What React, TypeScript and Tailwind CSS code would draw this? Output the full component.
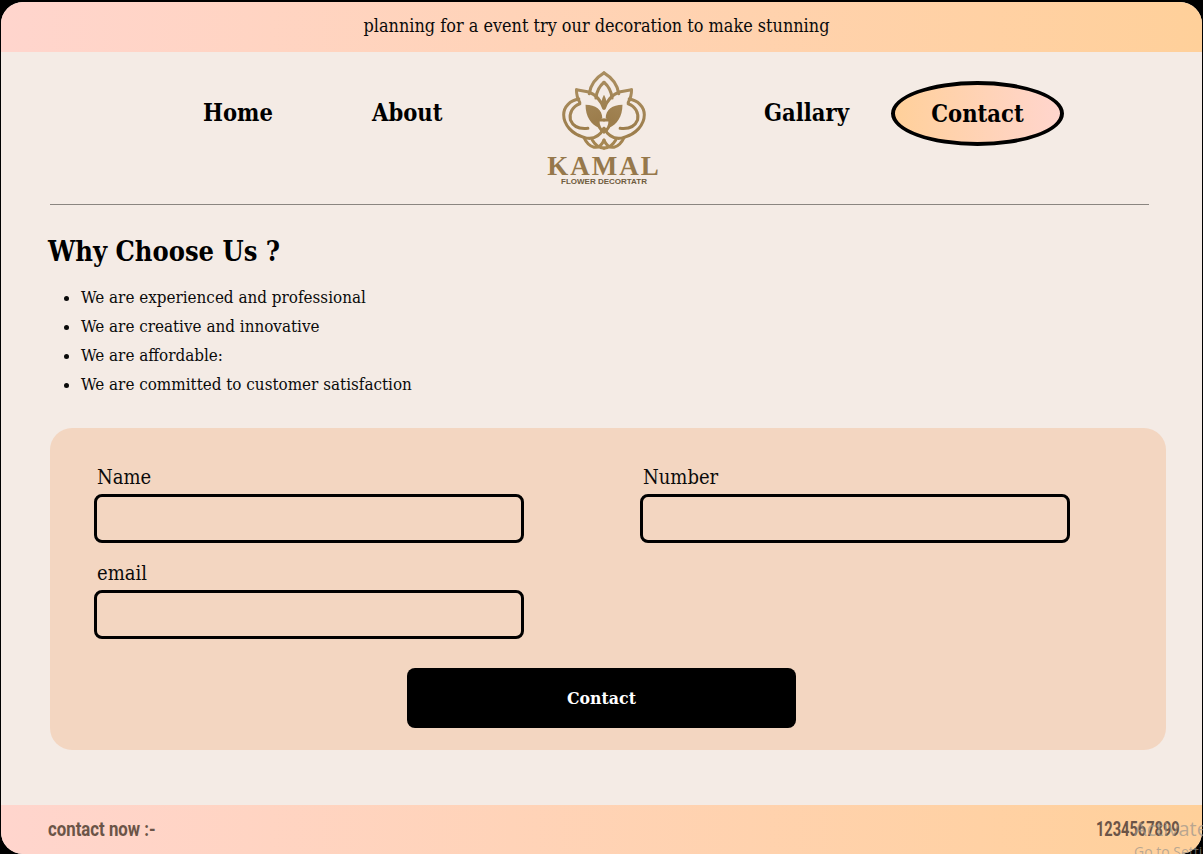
function Logo() {
  return (
    <div className="flex flex-col items-center w-[112px]">
      <svg width="84" height="81" viewBox="125 35 250 240" fill="none" strokeLinecap="round" strokeLinejoin="round">
        <defs>
          <linearGradient id="gold" gradientUnits="userSpaceOnUse" x1="200" y1="40" x2="300" y2="275">
            <stop offset="0" stopColor="#ac9062" />
            <stop offset="0.55" stopColor="#9c7d4c" />
            <stop offset="1" stopColor="#ad8e58" />
          </linearGradient>
          <g id="half">
            <g stroke="url(#gold)" strokeWidth="9">
              <path d="M250 40C225 55 210 75 206 102" />
              <path d="M250 68C236 80 228 95 226 115" />
              <path d="M168 90L205 97C225 105 240 120 249 145" />
              <path d="M168 90C168 105 172 118 178 128" />
              <path d="M175 118C150 122 130 140 130 165C130 195 155 222 190 232C215 240 235 232 250 205" />
              <path d="M178 132C156 140 146 160 150 180C158 200 175 208 202 205" />
              <path d="M190 232C205 264 235 275 250 240" />
              <path d="M215 240C228 262 240 264 250 264" />
              <path d="M232 180L250 180M232 180C232 200 240 210 250 216" />
            </g>
            <path fill="url(#gold)" d="M195 135C225 135 245 150 245 175C232 180 230 190 234 203C212 195 195 170 195 135Z" />
            <path fill="url(#gold)" d="M250 105C241 120 241 135 250 147Z" />
          </g>
        </defs>
        <use href="#half" />
        <use href="#half" transform="matrix(-1 0 0 1 500 0)" />
      </svg>
      <span className="font-['Liberation_Serif',serif] font-bold text-[27px] leading-[24px] tracking-[2px] text-[#96784b] mt-[2px]">KAMAL</span>
      <span className="font-['Liberation_Sans',sans-serif] font-bold text-[8px] leading-[8px] text-[#6f5c3e] whitespace-nowrap">FLOWER DECORTATR</span>
    </div>
  );
}

function Field({ label, className }: { label: string; className?: string }) {
  return (
    <div className={className}>
      <label className="block pl-[3px] text-[20px] leading-[24px] text-[#0a0a0a] font-['DejaVu_Serif',serif] [font-stretch:condensed]">{label}</label>
      <input className="block w-[430px] h-[49px] mt-[5px] rounded-lg border-[3px] border-black bg-transparent" />
    </div>
  );
}

const navFont = "font-['DejaVu_Serif',serif] [font-stretch:condensed] font-bold text-[23.5px] leading-[30px] text-black";

export default function App() {
  const perks = [
    "We are experienced and professional",
    "We are creative and innovative",
    "We are affordable:",
    "We are committed to customer satisfaction",
  ];

  return (
    <div className="w-[1203px] h-[854px] bg-black pt-[2px] pl-[1px] pr-[1px] overflow-hidden relative">
      <div className="h-[852px] rounded-[22px] overflow-hidden bg-[#f4ebe5] flex flex-col">
        <div className="h-[50px] flex items-center justify-center bg-gradient-to-r from-[#ffd5cd] to-[#ffd09a] font-['DejaVu_Serif',serif] [font-stretch:condensed] text-[17.9px] text-[#0a0a0a] pr-[10px] pb-[2px]">
          planning for a event try our decoration to make stunning
        </div>

        <nav className="h-[153px] ml-[49px] mr-[53px] border-b border-[#8a8580] flex items-start">
          <a className={`${navFont} mt-[46px] ml-[153px] w-[169px]`}>Home</a>
          <a className={`${navFont} mt-[46px] w-[176px]`}>About</a>
          <div className="mt-[19px] w-[216px]"><Logo /></div>
          <a className={`${navFont} mt-[46px] w-[127px]`}>Gallary</a>
          <a className={`${navFont} mt-[29px] w-[173px] h-[65px] rounded-[50%] border-[4px] border-black bg-gradient-to-r from-[#ffd09a] to-[#ffd5cd] flex items-center justify-center`}>Contact</a>
        </nav>

        <section className="pl-[47px] pt-[29px]">
          <h2 className="font-['DejaVu_Serif',serif] [font-stretch:condensed] font-bold text-[27px] leading-[36px] text-black">Why Choose Us ?</h2>
          <ul className="list-disc pl-[33px] mt-[13px] font-['DejaVu_Serif',serif] [font-stretch:condensed] text-[16.9px] leading-[29px] text-[#0a0a0a]">
            {perks.map((p) => (
              <li key={p}>{p}</li>
            ))}
          </ul>
        </section>

        <form className="mt-[29px] ml-[49px] w-[1116px] h-[322px] rounded-[22px] bg-[#f3d6c1] pl-[44px] pt-[37px]">
          <div className="flex gap-[116px]">
            <Field label="Name" />
            <Field label="Number" />
          </div>
          <Field label="email" className="mt-[18px]" />
          <button type="button" className="block ml-[313px] mt-[29px] w-[389px] h-[60px] rounded-lg bg-black text-white font-['DejaVu_Serif',serif] [font-stretch:condensed] font-bold text-[17.5px]">
            Contact
          </button>
        </form>

        <footer className="mt-auto h-[49px] flex items-center justify-between pl-[47px] pr-[22px] pb-[2px] bg-gradient-to-r from-[#ffd5cd] to-[#ffd09a] font-['Roboto',sans-serif] font-bold text-[20px] text-[#6b5447]">
          <span className="inline-block origin-left scale-x-[.84]">contact now :-</span>
          <span className="inline-block origin-right scale-x-[.73]">1234567899</span>
        </footer>
      </div>

      <div className="absolute left-[1134px] top-[817px] font-['Open_Sans',sans-serif] text-[#9a948c]/70 whitespace-nowrap">
        <p className="text-[20px] leading-[24px]">Activate Windows</p>
        <p className="text-[14px] leading-[20px] mt-[1px]">Go to Settings</p>
      </div>
    </div>
  );
}
